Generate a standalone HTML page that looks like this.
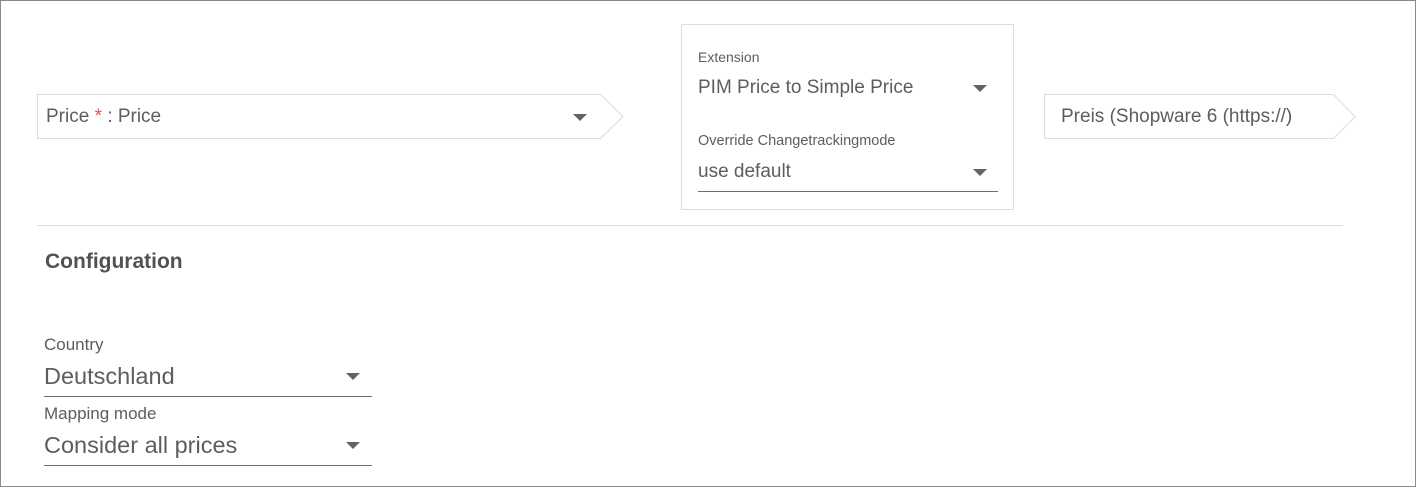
<!DOCTYPE html>
<html><head><style>
body{margin:0;width:1416px;height:487px;background:#fff;font-family:"Liberation Sans",sans-serif;color:#5a5e60;position:relative;overflow:hidden}
.frame{position:absolute;left:0;top:0;width:1414px;height:485px;border:1px solid #8a8a8a}
.a{position:absolute;white-space:nowrap}
.tri{position:absolute;width:0;height:0;border-left:7px solid transparent;border-right:7px solid transparent;border-top:7px solid #5f6466}
</style></head><body>
<div class="frame"></div>
<svg class="a" style="left:0;top:0" width="1416" height="487">
<polygon points="37.5,94.5 600.5,94.5 623,116.5 600.5,138.5 37.5,138.5" fill="#fff" stroke="#dcdcdc"/>
<polygon points="1044.5,94.5 1333.5,94.5 1355,116.5 1333.5,138.5 1044.5,138.5" fill="#fff" stroke="#dcdcdc"/>
<rect x="681.5" y="24.5" width="332" height="185" fill="#fff" stroke="#dcdcdc"/>
<line x1="37" y1="225.5" x2="1343" y2="225.5" stroke="#dcdcdc"/>
<line x1="698" y1="191.5" x2="998" y2="191.5" stroke="#6a6e70"/>
<line x1="44" y1="396.5" x2="372" y2="396.5" stroke="#6a6e70"/>
<line x1="44" y1="465.5" x2="372" y2="465.5" stroke="#6a6e70"/>
</svg>
<div class="a" style="left:46px;top:106px;font-size:19px">Price <span style="color:#e05555">*</span> : Price</div>
<div class="tri" style="left:573px;top:114px"></div>
<div class="a" style="left:698px;top:49px;font-size:14px">Extension</div>
<div class="a" style="left:698px;top:77px;font-size:19px">PIM Price to Simple Price</div>
<div class="tri" style="left:973px;top:85px"></div>
<div class="a" style="left:698px;top:133px;font-size:14.5px">Override Changetrackingmode</div>
<div class="a" style="left:698px;top:161px;font-size:19px">use default</div>
<div class="tri" style="left:973px;top:169px"></div>
<div class="a" style="left:1061px;top:106px;font-size:19px">Preis (Shopware 6 (https://)</div>
<div class="a" style="left:45px;top:250px;font-size:21px;font-weight:bold;color:#4f5355">Configuration</div>
<div class="a" style="left:44px;top:335px;font-size:17px">Country</div>
<div class="a" style="left:44px;top:363px;font-size:23.5px">Deutschland</div>
<div class="tri" style="left:346px;top:373px"></div>
<div class="a" style="left:44px;top:404px;font-size:17px">Mapping mode</div>
<div class="a" style="left:44px;top:432px;font-size:23.5px">Consider all prices</div>
<div class="tri" style="left:346px;top:442px"></div>
</body></html>
